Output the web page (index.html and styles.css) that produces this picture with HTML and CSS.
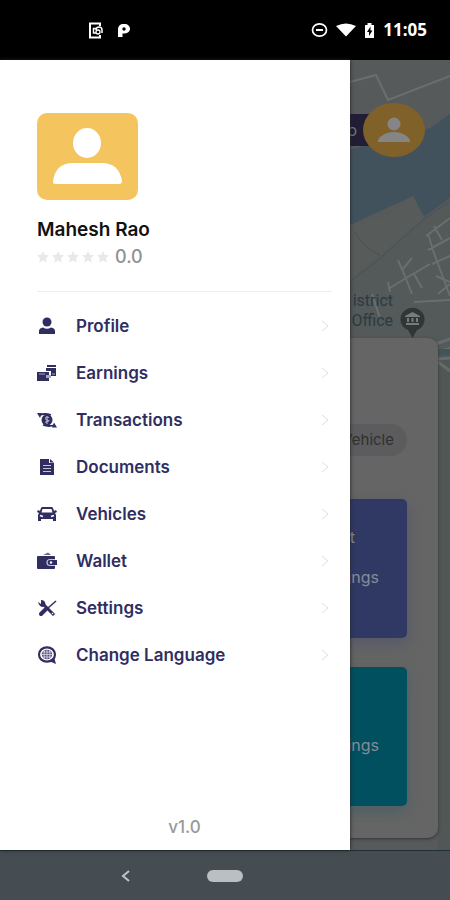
FILE: index.html
```html
<!DOCTYPE html>
<html lang="en">
<head>
<meta charset="utf-8">
<meta name="viewport" content="width=device-width, initial-scale=1">
<title>Driver menu</title>
<link rel="stylesheet" href="styles.css">
</head>
<body>
<header class="status">
  <div class="status-group">
    <svg width="15" height="17" viewBox="0 0 15 17" fill="none" stroke="#fff" stroke-width="2"><path d="M12 4V1.500H2V15.500H12V13"/><path d="M8 6.500H5.500V11H8" stroke-width="1.500"/><path d="M8 8a3 3 0 0 1 6 0M14 8v3" stroke-width="1.500"/><circle cx="10" cy="10" r="2" stroke-width="1.300"/></svg>
    <svg width="14" height="15" viewBox="0 0 14 15"><path d="M1 14V6a5 5 0 0 1 5-5h2a5 4.700 0 0 1 0 9.500H5.500V14z" fill="#fff"/><circle cx="7" cy="6" r="1.700" fill="#000"/></svg>
  </div>
  <div class="status-group">
    <svg width="17" height="16" viewBox="0 0 17 16" fill="none" stroke="#fff"><ellipse cx="8.500" cy="8" rx="7" ry="6.200" stroke-width="1.700"/><path d="M5 8h7" stroke-width="2"/></svg>
    <svg width="20" height="14" viewBox="0 0 20 14"><path d="M0 3Q10-2 20 3L10 13.500z" fill="#fff"/></svg>
    <svg width="11" height="15" viewBox="0 0 11 15"><path d="M1 2h2.500V0h4v2H10v13H1z" fill="#fff"/><path d="M6.500 3.500L3 9h2v4l3.500-5.500h-2z" fill="#000"/></svg>
    <time class="clock">11:05</time>
  </div>
</header>

<main class="stage">
  <section class="home">
    <svg class="map" viewBox="0 0 450 790" preserveAspectRatio="xMaxYMin slice">
      <rect width="450" height="790" fill="#565a5b"/>
      <path d="M340 92L372 84L430 68L450 54V138L424 157L413 136L350 165L340 168z" fill="#42525d"/>
      <path d="M340 168L385 157L413 136L424 157L380 194L340 226z" fill="#575c5b"/>
      <path d="M340 228L380 198L424 159L450 141V420H340z" fill="#545959"/>
      <path d="M350 22L376 15L388 40L450 16" fill="none" stroke="#6a6e6e" stroke-width="2"/>
      <path d="M340 228L350 222L380 198L424 159L450 141M355 172Q363 188 380 195" fill="none" stroke="#465257" stroke-width="1"/>
      <g fill="none" stroke="#6a6e6e" stroke-width="2">
        <path d="M426 176l24-18M428 174l7 22 15 40M434 166l8 14M428 190l22-12M432 204l18-8M390 228l16-10 24-14M398 200l6 14 8 20M388 222l2 10M412 198l-10 12M414 242l36-2M414 214l8 14M436 216l14 6M438 234l12-10M372 234l8 24M436 292l14-4M438 318l12 10"/>
      </g>
      <path d="M438 292v498h12V292z" fill="#515756"/>
      <path d="M438 292h12" stroke="#43535a" stroke-width="6"/>
      <path d="M438 299l12-1M438 302l12 9" stroke="#666b6b" stroke-width="3"/>
      <path d="M436 284L450 279" stroke="#666b6b" stroke-width="3"/>
    </svg>
    <div class="home-content">
      <div class="topbar">
        <span class="online">o</span>
        <button class="avatar-small" aria-label="Account"><svg width="32" height="26" viewBox="0 0 32 26" fill="#858585"><ellipse cx="16" cy="7" rx="6.500" ry="6.500"/><path d="M0 25v-2Q5 15 16 15T32 23v2z"/></svg></button>
      </div>
      <div class="place">
        <p class="place-name">istrict<br>Office</p>
        <svg width="25" height="31" viewBox="0 0 25 31"><path d="M12.500 31L8 23A12 11.500 0 1 1 17 23z" fill="#303535"/><path d="M5 9l7.500-4L20 9v1H5zM6 16h13v2H6zM7 11h2v4H7zM11.500 11h2v4h-2zM16 11h2v4h-2z" fill="#777b7b"/></svg>
      </div>
      <section class="sheet">
        <span class="vehicle-pill">Vehicle</span>
        <article class="tile tile-blue"><p>t</p><p>ings</p></article>
        <article class="tile tile-teal"><p>ings</p></article>
      </section>
    </div>
  </section>

  <aside class="drawer">
    <div class="profile">
      <svg class="photo" width="101" height="87" viewBox="0 0 101 87"><rect width="101" height="87" rx="10" fill="#f4c55f"/><ellipse cx="50" cy="30" rx="14" ry="15" fill="#fff"/><path d="M16 69Q18 50 36 50H65Q82 50 85 68Q85 71 82 71H19Q16 71 16 69z" fill="#fff"/></svg>
      <h1 class="name">Mahesh Rao</h1>
      <div class="rating">
        <svg width="72" height="12" viewBox="0 0 72 12" fill="#e9e9e9"><defs><path id="star" d="M6 0l1.800 3.800 4.200.5-3 2.900.8 4.300L6 9.400l-3.800 2.100.8-4.300-3-2.900 4.200-.5z"/></defs><use href="#star"/><use href="#star" x="15"/><use href="#star" x="30"/><use href="#star" x="45"/><use href="#star" x="60"/></svg>
        <span>0.0</span>
      </div>
    </div>
    <nav class="menu">
      <a href="#profile"><svg class="icon" viewBox="0 0 20 18"><ellipse cx="10" cy="5" rx="4.500" ry="4.500"/><path d="M2 17v-3q0-3 4-3.500 4 2.500 8 0 4 .5 4 3.500v3z"/></svg><span>Profile</span><svg class="chevron" viewBox="0 0 8 12"><path d="M1 1l6 5-6 5"/></svg></a>
      <a href="#earnings"><svg class="icon" viewBox="0 0 20 18"><path d="M10 1h9v2h-9zM9 4h10v8h-5V7H9z"/><path d="M0 8h12v9H0z"/><path d="M9 11h5v3H9z" fill="#a9a7bf"/><path d="M2 10h6M15 10h3" stroke="#a9a7bf"/></svg><span>Earnings</span><svg class="chevron" viewBox="0 0 8 12"><path d="M1 1l6 5-6 5"/></svg></a>
      <a href="#transactions"><svg class="icon" viewBox="0 0 20 18"><ellipse cx="10" cy="9" rx="5.500" ry="5.500"/><path d="M2 4q6-2 12 0M18 14q-6 2-12 0" fill="none" stroke="#302d61" stroke-width="1.800"/><path d="M0 2l5 0-2 5zM20 16.500l-5 0 2-5z"/><path d="M12 6.500q-4-1-3.500 1t3 2-3.500 1.800M10 5v8" fill="none" stroke="#c5c4d3" stroke-width="1"/></svg><span>Transactions</span><svg class="chevron" viewBox="0 0 8 12"><path d="M1 1l6 5-6 5"/></svg></a>
      <a href="#documents"><svg class="icon" viewBox="0 0 20 18"><path d="M3 1h9v4h5v12H3z"/><path d="M13 1l4 3.500h-4z"/><path d="M6 7.500h8M6 10.500h8M6 13.500h8" stroke="#c5c4d3" stroke-width="1.200"/></svg><span>Documents</span><svg class="chevron" viewBox="0 0 8 12"><path d="M1 1l6 5-6 5"/></svg></a>
      <a href="#vehicles"><svg class="icon" viewBox="0 0 20 18"><path d="M5 2h10q1 0 2 4l2-1 1 2-2 1 1 2v6h-3v-2H4v2H1v-6l1-2-2-1 1-2 2 1q1-4 2-4zM5.500 4L4.500 7.500h11L14.500 4z" fill-rule="evenodd"/><path d="M3 10.500l3 1M17 10.500l-3 1" stroke="#fff" stroke-width="1.500"/></svg><span>Vehicles</span><svg class="chevron" viewBox="0 0 8 12"><path d="M1 1l6 5-6 5"/></svg></a>
      <a href="#wallet"><svg class="icon" viewBox="0 0 20 18"><path d="M0 5q0-1 1-1h16q1 0 1 1v3h2v5h-2v3q0 1-1 1H1q-1 0-1-1z"/><path d="M6 3l5-2.500L14 3z" fill="#6b698d"/><path d="M18 7.500h-5q-3 0-3 3t3 3h5" fill="none" stroke="#c5c4d3" stroke-width="1.200"/><circle cx="14" cy="10.500" r="1.200" fill="#fff"/></svg><span>Wallet</span><svg class="chevron" viewBox="0 0 8 12"><path d="M1 1l6 5-6 5"/></svg></a>
      <a href="#settings"><svg class="icon" viewBox="0 0 20 18"><path d="M6 5l11 11" stroke="#302d61" stroke-width="3"/><path d="M1 3l3 2V1q4 0 4.500 4Q8 8 5 8 2 7 1 3z"/><path d="M19 2l-8 7" stroke="#302d61" stroke-width="1.500"/><path d="M9 10l-5 5" stroke="#302d61" stroke-width="4" stroke-linecap="round"/><circle cx="15.500" cy="14.500" r=".8" fill="#fff"/></svg><span>Settings</span><svg class="chevron" viewBox="0 0 8 12"><path d="M1 1l6 5-6 5"/></svg></a>
      <a href="#language"><svg class="icon" viewBox="0 0 20 18"><ellipse cx="10" cy="8.500" rx="8" ry="7.200" fill="none" stroke="#302d61" stroke-width="2.200"/><path d="M12 15l5-4 2 7z"/><ellipse cx="10" cy="8.500" rx="5.200" ry="4.800" fill="#55527d"/><path d="M5 8.500h10M10 4v9M7.500 4.500q-1 4 0 8M12.500 4.500q1 4 0 8M6 6h8M6 11h8" fill="none" stroke="#dddce6" stroke-width=".8"/></svg><span>Change Language</span><svg class="chevron" viewBox="0 0 8 12"><path d="M1 1l6 5-6 5"/></svg></a>
    </nav>
    <p class="version">v1.0</p>
  </aside>
</main>

<footer class="navbar">
  <button class="back" aria-label="Back"><svg width="9" height="12" viewBox="0 0 9 12"><path d="M8 1L2 6l6 5" fill="none" stroke="#c0c6c9" stroke-width="2"/></svg></button>
  <button class="home-button" aria-label="Home"></button>
</footer>
</body>
</html>
```
FILE: styles.css
```css
* { box-sizing: border-box; }
body {
  margin: 0;
  min-height: 100vh;
  display: flex;
  flex-direction: column;
  background: #000;
  font-family: Inter, "Liberation Sans", sans-serif;
}
h1, p { margin: 0; }
button { border: 0; padding: 0; font: inherit; }
svg { display: block; flex: none; }

.status {
  height: 60px;
  padding: 0 23px 0 88px;
  display: flex;
  align-items: center;
  justify-content: space-between;
  color: #fff;
}
.status-group { display: flex; align-items: center; gap: 8px; }
.status-group:first-child { gap: 14px; }
.clock { font: 700 17px/20px "Open Sans", sans-serif; }

.stage { position: relative; flex: 1; display: flex; }
.home { position: relative; flex: 1; display: flex; overflow: hidden; }
.map { position: absolute; inset: 0; width: 100%; height: 100%; }
.home-content {
  position: relative;
  flex: 1;
  display: flex;
  flex-direction: column;
  padding: 43px 12px 12px;
}
.topbar { display: flex; justify-content: flex-end; align-items: center; padding-right: 13px; }
.online {
  width: 120px;
  padding-right: 15px;
  margin-right: -9px;
  background: #211d36;
  color: #777;
  font-size: 16px;
  line-height: 32px;
  text-align: right;
}
.avatar-small {
  position: relative;
  width: 62px;
  height: 54px;
  border-radius: 50%;
  background: #80612a;
  display: grid;
  place-items: center;
}
.place {
  margin-top: auto;
  padding-right: 13px;
  display: flex;
  justify-content: flex-end;
  align-items: flex-end;
  gap: 7px;
}
.place-name { padding-bottom: 7px; color: #293b43; font: 16px/20px Roboto, sans-serif; text-align: right; }
.sheet {
  padding: 86px 31px 32px;
  border-radius: 10px;
  background: #656565;
  box-shadow: 0 1px 3px #333;
  display: flex;
  flex-direction: column;
}
.vehicle-pill {
  align-self: flex-end;
  width: 160px;
  padding-right: 13px;
  border-radius: 16px;
  background: #5c5c5e;
  color: #303030;
  font-size: 15px;
  line-height: 32px;
  text-align: right;
}
.tile {
  height: 139px;
  border-radius: 5px;
  color: #858b98;
  font-size: 16px;
  line-height: 20px;
  text-align: right;
  padding-right: 28px;
}
.tile-blue { margin-top: 43px; padding-top: 28px; background: #303963; box-shadow: 0 6px 14px #55586a; }
.tile-blue p:first-child { padding-right: 24px; margin-bottom: 20px; }
.tile-teal { margin-top: 29px; padding-top: 68px; background: #00505f; box-shadow: 0 6px 14px #4c6064; }

.drawer {
  position: absolute;
  inset: 0 auto 0 0;
  width: 77.8%;
  padding: 53px 18px 0 37px;
  background: #fff;
  box-shadow: 0 0 4px #222;
  display: flex;
  flex-direction: column;
}
.profile { padding-bottom: 21px; border-bottom: 1px solid #eee; }
.name { margin-top: 18px; color: #111; font-size: 19px; line-height: 24px; font-weight: 600; }
.rating { margin-top: 2px; display: flex; align-items: center; gap: 6px; color: #909090; font-size: 18px; line-height: 26px; font-weight: 500; }
.menu { margin-top: 10px; }
.menu a {
  height: 47px;
  display: flex;
  align-items: center;
  color: #302d61;
  font-size: 17px;
  line-height: 24px;
  font-weight: 600;
  text-decoration: none;
}
.icon { width: 20px; height: 18px; margin-right: 19px; fill: #302d61; }
.chevron { width: 8px; height: 12px; margin: 0 3px 0 auto; fill: none; stroke: #dedede; stroke-width: 1; }
.version { margin: auto 0 12px; text-align: center; color: #999; font-size: 17px; line-height: 22px; font-weight: 500; }

.navbar {
  height: 50px;
  border-top: 1px solid #1f3035;
  background: #454d53;
  display: grid;
  grid-template-columns: 1fr 36px 1fr;
  align-items: center;
}
.back { justify-self: center; margin-left: 44px; background: none; }
.home-button { height: 12px; border-radius: 6px; background: #b9bfc2; }
```
